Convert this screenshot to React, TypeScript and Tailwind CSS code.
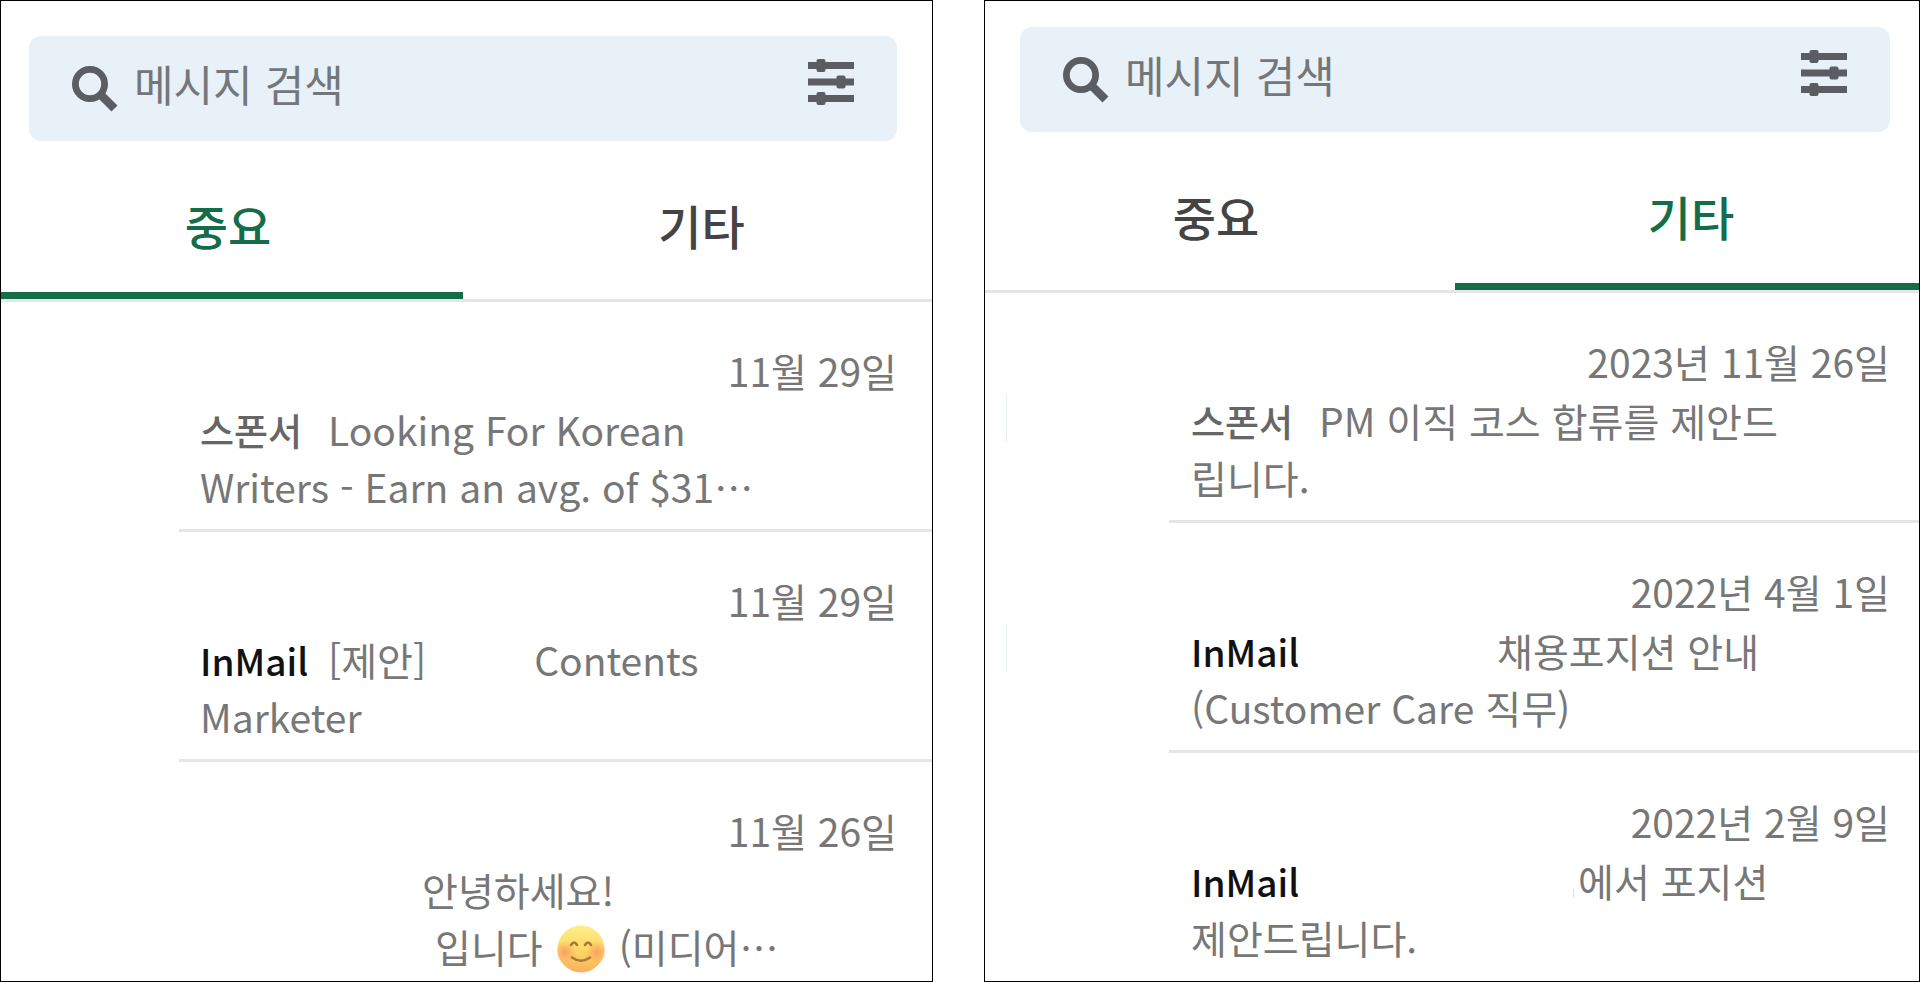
import React, { useState } from 'react';
import clsx from 'clsx';

type TabId = 'focused' | 'other';

interface Message {
  id: string;
  date: string;
  label?: string;
  lines: React.ReactNode[];
  edge?: boolean;
}

interface InboxPanelProps {
  name: string;
  initialTab: TabId;
  messages: Message[];
  className: string;
  searchClassName: string;
  tabListClassName: string;
  avatarClassName: string;
  bodyClassName: string;
}

const tabs: { id: TabId; label: string; className: string }[] = [
  { id: 'focused', label: '중요', className: 'pr-2' },
  { id: 'other', label: '기타', className: 'pl-2' },
];

const SearchIcon: React.FC = () => (
  <svg viewBox="0 0 46 46" className="h-[46px] w-[46px] shrink-0" aria-hidden="true">
    <circle cx="18" cy="18" r="14.6" fill="none" stroke="#5a5d61" strokeWidth="6.8" />
    <path d="M27.5 27.5 L42.5 42.5" stroke="#5a5d61" strokeWidth="8.4" />
  </svg>
);

const FilterIcon: React.FC = () => (
  <svg viewBox="0 0 46 46" className="h-[46px] w-[46px]" fill="#5a5d61" aria-hidden="true">
    <path d="M0 3h46v7H0zM0 19.5h46v7H0zM0 36h46v7H0z" />
    <rect x="8.5" y="0" width="9" height="13" rx="2" />
    <rect x="28.5" y="16.5" width="9" height="13" rx="2" />
    <rect x="8.5" y="33" width="9" height="13" rx="2" />
  </svg>
);

const SmileIcon: React.FC = () => (
  <svg
    viewBox="0 0 48 48"
    className="mx-[14px] inline-block h-12 w-12 align-[-10px]"
    role="img"
    aria-label="웃는 얼굴"
  >
    <defs>
      <linearGradient id="face" x1="0" y1="0" x2="0" y2="1">
        <stop offset="0" stopColor="#fdee8a" />
        <stop offset="0.5" stopColor="#fdd965" />
        <stop offset="1" stopColor="#f8b05c" />
      </linearGradient>
      <radialGradient id="cheek">
        <stop offset="0" stopColor="#f99a62" stopOpacity="0.9" />
        <stop offset="1" stopColor="#f99a62" stopOpacity="0" />
      </radialGradient>
    </defs>
    <circle cx="24" cy="24" r="23.5" fill="url(#face)" />
    <circle cx="8" cy="27" r="11" fill="url(#cheek)" />
    <circle cx="40" cy="27" r="11" fill="url(#cheek)" />
    <g fill="none" stroke="#a8783c" strokeWidth="2.6" strokeLinecap="round">
      <path d="M14 20q3-5 6 0" />
      <path d="M28 20q3-5 6 0" />
      <path d="M15 32.5q9 6.5 18 0" />
    </g>
  </svg>
);

const focusedMessages: Message[] = [
  {
    id: 'writers',
    date: '11월 29일',
    label: '스폰서',
    lines: ['Looking For Korean', 'Writers - Earn an avg. of $31…'],
  },
  {
    id: 'marketer',
    date: '11월 29일',
    label: 'InMail',
    lines: [
      <>
        [제안]<span className="ml-[108px]">Contents</span>
      </>,
      'Marketer',
    ],
  },
  {
    id: 'media',
    date: '11월 26일',
    lines: [
      <span className="ml-[222px]">안녕하세요!</span>,
      <span className="ml-[235px]">
        입니다
        <SmileIcon />
        (미디어…
      </span>,
    ],
  },
];

const otherMessages: Message[] = [
  {
    id: 'course',
    date: '2023년 11월 26일',
    label: '스폰서',
    lines: ['PM 이직 코스 합류를 제안드', '립니다.'],
    edge: true,
  },
  {
    id: 'care',
    date: '2022년 4월 1일',
    label: 'InMail',
    lines: [<span className="ml-[178px]">채용포지션 안내</span>, '(Customer Care 직무)'],
    edge: true,
  },
  {
    id: 'position',
    date: '2022년 2월 9일',
    label: 'InMail',
    lines: [
      <>
        <span className="mr-1 ml-[254px] inline-block h-2 w-px bg-[#ddd]" />
        에서 포지션
      </>,
      '제안드립니다.',
    ],
  },
];

const MessageRow: React.FC<{
  message: Message;
  avatarClassName: string;
  bodyClassName: string;
}> = ({ message, avatarClassName, bodyClassName }) => (
  <li className="group flex">
    <div className={clsx('flex shrink-0 items-center', avatarClassName)}>
      {message.edge && <div className="h-12 w-px bg-[#e8efef]" />}
    </div>
    <div
      className={clsx(
        'min-w-0 flex-1 border-b-[3px] border-[#e6e6e6] pt-10 pb-[14px] text-[39px] leading-[57px] whitespace-nowrap text-[#777] group-last:border-b-0 group-last:pb-0',
        bodyClassName
      )}
    >
      <time className="mb-[2px] block text-right">{message.date}</time>
      <p>
        {message.label && (
          <span
            className={clsx(
              'mr-[27px] inline-block w-[101px] text-[37px] leading-none font-medium',
              message.label === 'InMail' ? 'text-[#111]' : 'text-[#666]'
            )}
          >
            {message.label}
          </span>
        )}
        {message.lines[0]}
      </p>
      <p>{message.lines[1]}</p>
    </div>
  </li>
);

const InboxPanel: React.FC<InboxPanelProps> = ({
  name,
  initialTab,
  messages,
  className,
  searchClassName,
  tabListClassName,
  avatarClassName,
  bodyClassName,
}) => {
  const [activeTab, setActiveTab] = useState<TabId>(initialTab);

  return (
    <section className={clsx('min-w-0 border border-black', className)}>
      {/* Search */}
      <div
        className={clsx(
          'flex h-[105px] items-center rounded-xl bg-[#e8f0f8] px-[43px]',
          searchClassName
        )}
      >
        <SearchIcon />
        <input
          id={`${name}-search`}
          type="text"
          aria-label="메시지 검색"
          placeholder="메시지 검색"
          className="ml-4 min-w-0 flex-1 bg-transparent pb-3 text-[43px] leading-[60px] text-[#666] outline-none placeholder:text-[#74777a]"
        />
        <button type="button" aria-label="필터" className="mb-[14px]">
          <FilterIcon />
        </button>
      </div>

      {/* Tabs */}
      <div
        role="tablist"
        className={clsx('grid h-[161px] border-b-[3px] border-[#e6e6e6]', tabListClassName)}
      >
        {tabs.map((tab) => (
          <button
            key={tab.id}
            type="button"
            role="tab"
            aria-selected={activeTab === tab.id}
            onClick={() => setActiveTab(tab.id)}
            className={clsx(
              'border-b-[7px] pt-4 text-[47px] leading-[60px] font-medium',
              tab.className,
              activeTab === tab.id
                ? 'border-[#156c48] text-[#156c48]'
                : 'border-transparent text-[#444]'
            )}
          >
            {tab.label}
          </button>
        ))}
      </div>

      {/* Messages */}
      <ul>
        {messages.map((message) => (
          <MessageRow
            key={message.id}
            message={message}
            avatarClassName={avatarClassName}
            bodyClassName={bodyClassName}
          />
        ))}
      </ul>
    </section>
  );
};

const App: React.FC = () => (
  <main
    lang="ko"
    className="grid min-h-screen grid-cols-[933fr_936fr] gap-[51px] bg-white font-['Noto_Sans_CJK_KR',sans-serif]"
  >
    <InboxPanel
      name="focused"
      initialTab="focused"
      messages={focusedMessages}
      className="pt-[35px]"
      searchClassName="mr-[35px] ml-7"
      tabListClassName="grid-cols-[462fr_469fr]"
      avatarClassName="w-[178px]"
      bodyClassName="pr-[35px] pl-[21px]"
    />
    <InboxPanel
      name="other"
      initialTab="other"
      messages={otherMessages}
      className="pt-[26px]"
      searchClassName="mr-[29px] ml-[35px]"
      tabListClassName="grid-cols-[470fr_464fr]"
      avatarClassName="w-[184px] pt-5 pl-[21px]"
      bodyClassName="pr-[29px] pl-[22px]"
    />
  </main>
);

export default App;
